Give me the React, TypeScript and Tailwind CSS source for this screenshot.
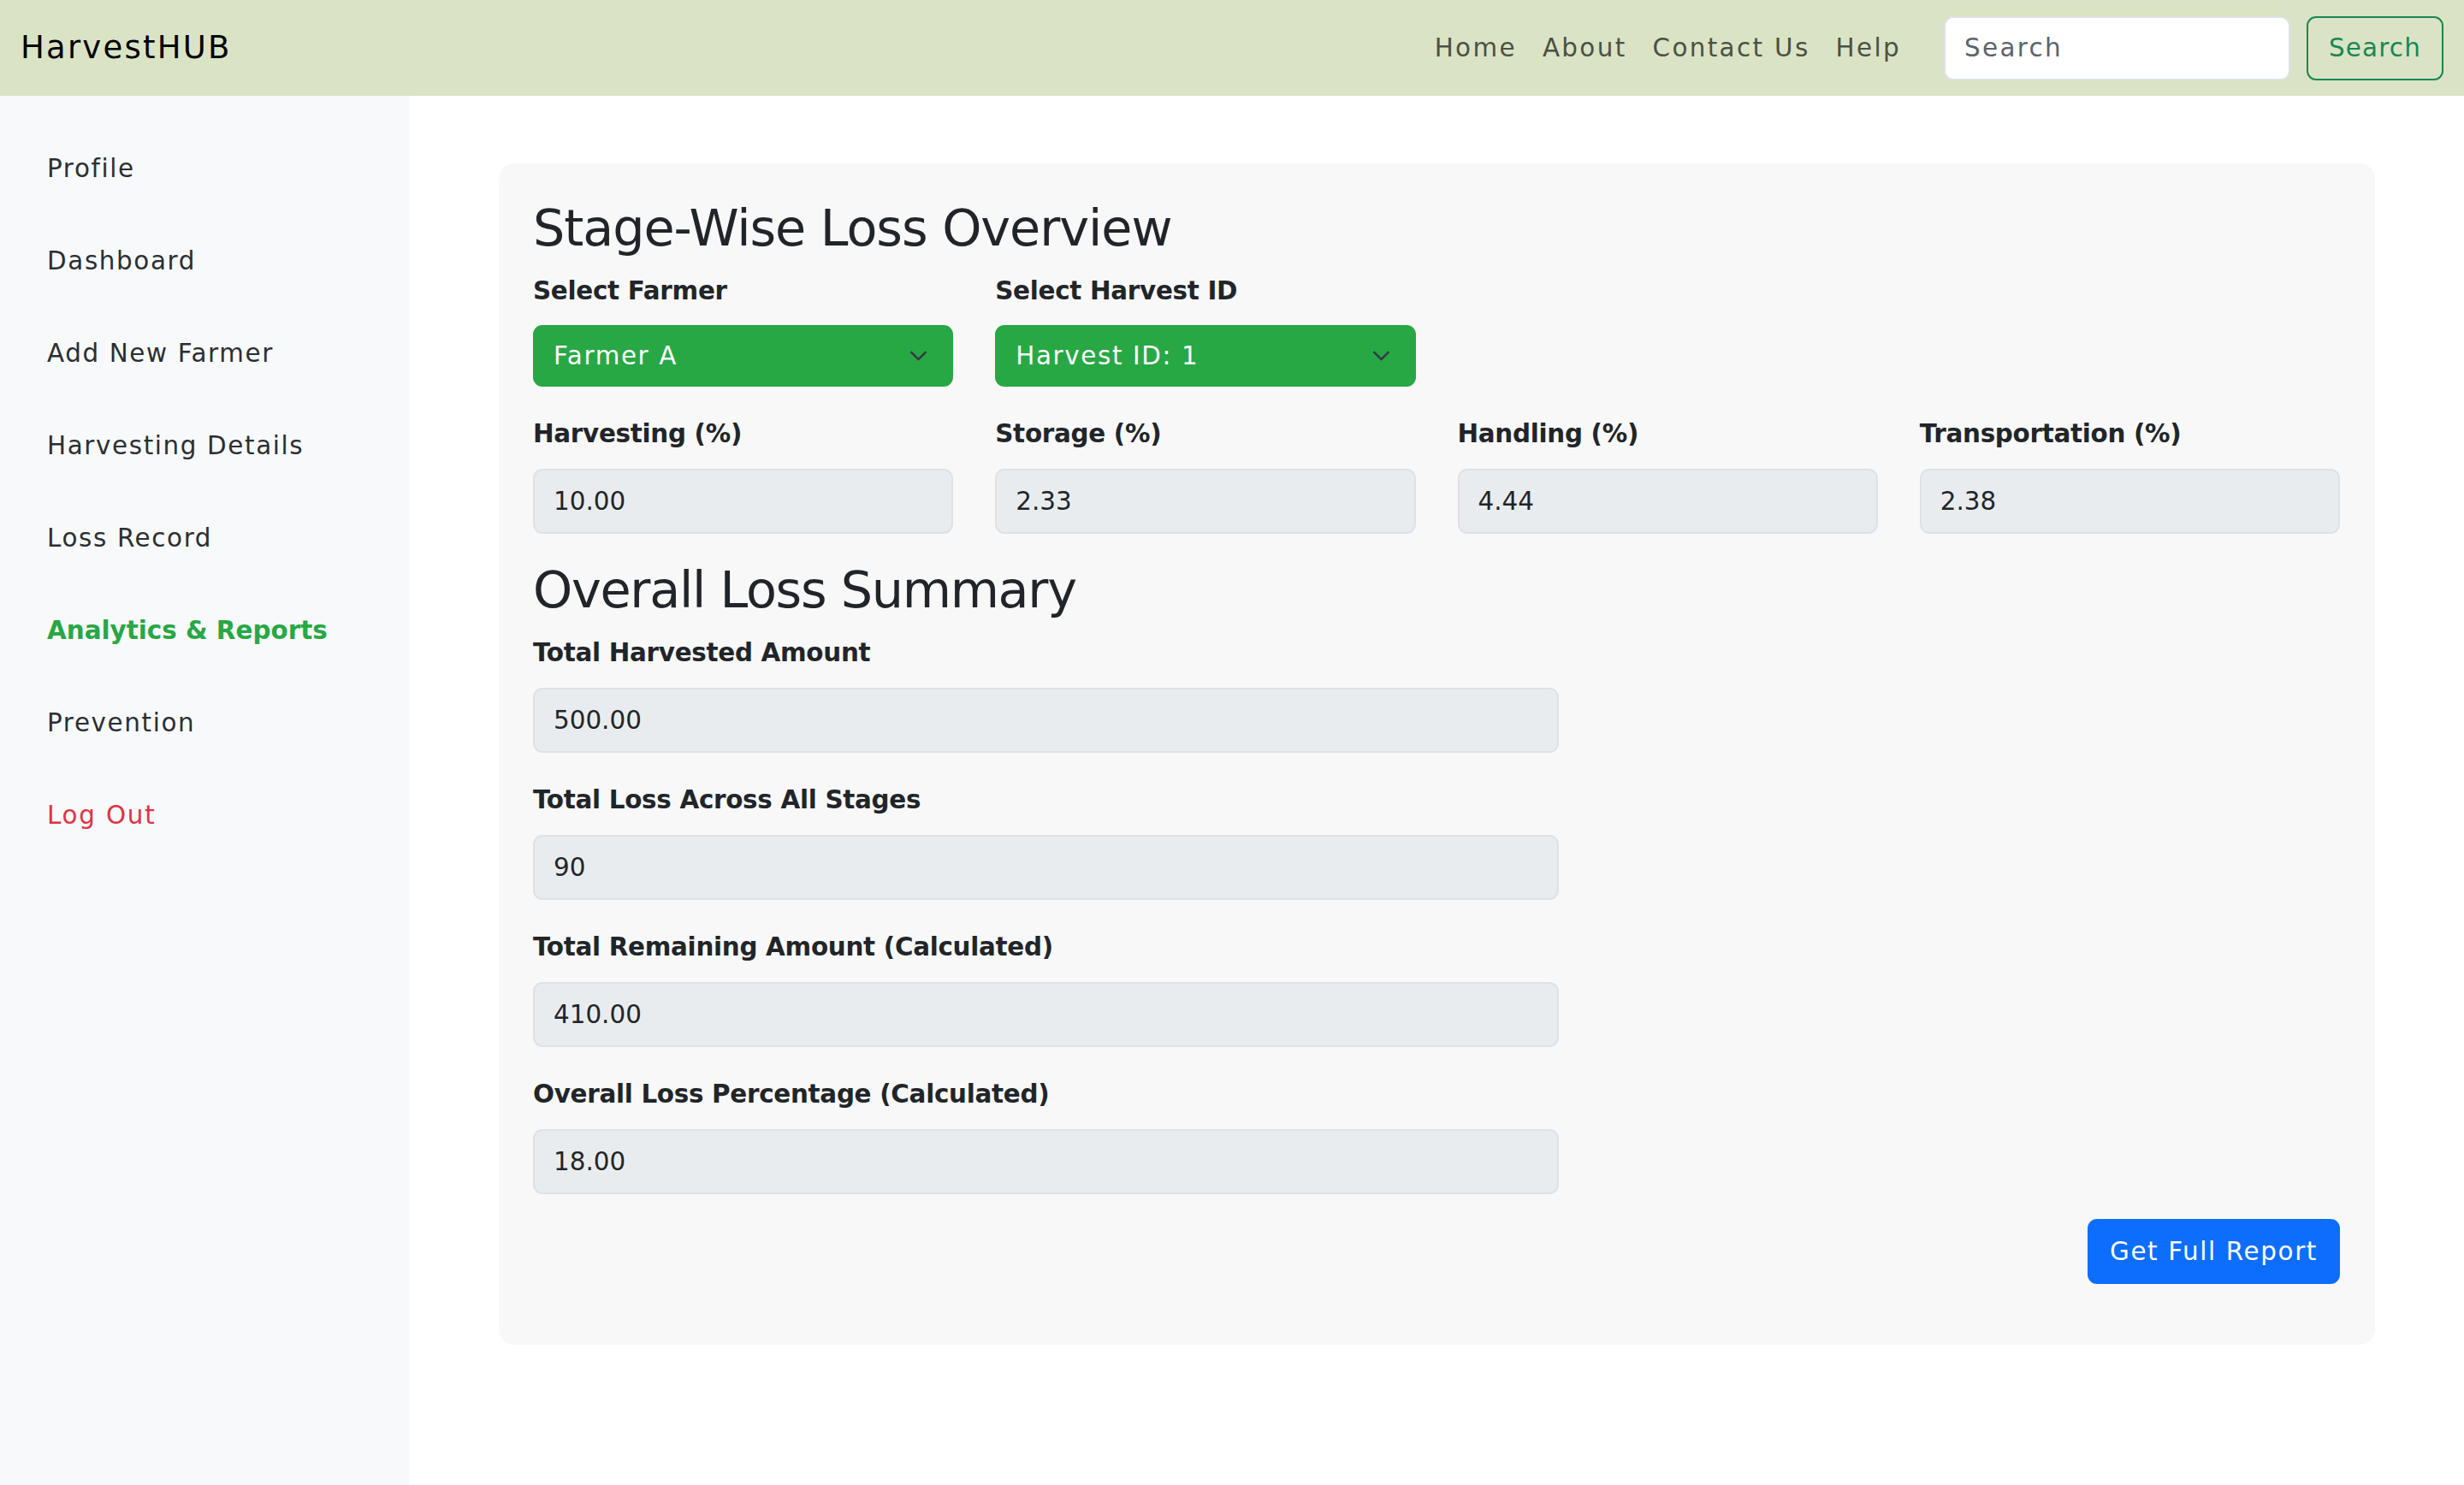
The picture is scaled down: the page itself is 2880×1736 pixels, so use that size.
const SIDEBAR_LINKS = [
  { label: "Profile", tone: "normal" },
  { label: "Dashboard", tone: "normal" },
  { label: "Add New Farmer", tone: "normal" },
  { label: "Harvesting Details", tone: "normal" },
  { label: "Loss Record", tone: "normal" },
  { label: "Analytics & Reports", tone: "active" },
  { label: "Prevention", tone: "normal" },
  { label: "Log Out", tone: "danger" },
];

const STAGES = [
  { label: "Harvesting (%)", value: "10.00" },
  { label: "Storage (%)", value: "2.33" },
  { label: "Handling (%)", value: "4.44" },
  { label: "Transportation (%)", value: "2.38" },
];

const SUMMARY = [
  { label: "Total Harvested Amount", value: "500.00" },
  { label: "Total Loss Across All Stages", value: "90" },
  { label: "Total Remaining Amount (Calculated)", value: "410.00" },
  { label: "Overall Loss Percentage (Calculated)", value: "18.00" },
];

function Chevron() {
  return (
    <svg className="h-[22px] w-[29px] shrink-0" viewBox="0 0 16 16" fill="none">
      <path d="m2 5 6 6 6-6" stroke="#343a40" strokeWidth="1.8" strokeLinecap="round" strokeLinejoin="round" />
    </svg>
  );
}

function GreenSelect({ label, value }: { label: string; value: string }) {
  return (
    <div className="flex flex-col">
      <span className="mb-[18px] text-[29.4px] font-bold leading-[44px] tracking-[-0.01em] text-[#212529]">{label}</span>
      <div className="flex h-[72px] items-center justify-between rounded-[11px] bg-[#28a745] pl-[24px] pr-[26px] text-[29.4px] tracking-[0.055em] text-white">
        <span>{value}</span>
        <Chevron />
      </div>
    </div>
  );
}

function ReadField({ label, value, wide }: { label: string; value: string; wide?: boolean }) {
  return (
    <div className={wide ? "flex w-[1199px] flex-col" : "flex flex-col"}>
      <span className="mb-[19px] text-[29.4px] font-bold leading-[44px] tracking-[-0.01em] text-[#212529]">{label}</span>
      <div className="flex h-[76px] items-center rounded-[11px] border-2 border-[#dee2e6] bg-[#e9ecef] px-[22px] text-[29.4px] text-[#212529]">
        {value}
      </div>
    </div>
  );
}

export default function App() {
  return (
    <div className="flex min-h-[1736px] flex-col bg-white font-['DejaVu_Sans',sans-serif] text-[#212529]">
      <nav className="flex h-[112px] shrink-0 items-center bg-[#dae4c5] pl-[24px] pr-[24px]">
        <span className="text-[37px] tracking-[0.06em] text-black">HarvestHUB</span>
        <div className="ml-auto flex items-center">
          {["Home", "About", "Contact Us", "Help"].map((l) => (
            <a key={l} className="px-[15px] text-[29.4px] tracking-[0.08em] text-[#4c5045]">
              {l}
            </a>
          ))}
        </div>
        <div className="ml-[35px] flex h-[75px] w-[405px] items-center rounded-[11px] border-2 border-[#dee2e6] bg-white px-[22px] text-[29.4px] tracking-[0.08em] text-[#5c636a]">
          Search
        </div>
        <button className="ml-[19px] h-[75px] w-[160px] rounded-[11px] border-2 border-[#198754] text-[29.4px] tracking-[0.04em] text-[#198754]">
          Search
        </button>
      </nav>

      <div className="flex flex-1">
        <aside className="flex w-[479px] shrink-0 flex-col bg-[#f8f9fa] pt-[31px]">
          {SIDEBAR_LINKS.map((s) => (
            <a
              key={s.label}
              className={
                s.tone === "active"
                  ? "flex h-[108px] items-center pl-[55px] text-[29.4px] font-bold text-[#28a745]"
                  : s.tone === "danger"
                    ? "flex h-[108px] items-center pl-[55px] text-[29.4px] tracking-[0.06em] text-[#dc3545]"
                    : "flex h-[108px] items-center pl-[55px] text-[29.4px] tracking-[0.055em] text-[#2b2f32]"
              }
            >
              {s.label}
            </a>
          ))}
        </aside>

        <main className="flex-1 px-[104px] pt-[79px]">
          <section className="rounded-[18px] bg-[#f8f8f8] pb-[71px] pl-[40px] pr-[41px] pt-[41px]">
            <h2 className="mb-[16px] text-[58.8px] leading-[70px] tracking-[-0.018em]">Stage-Wise Loss Overview</h2>

            <div className="grid grid-cols-4 gap-x-[49px]">
              <GreenSelect label="Select Farmer" value="Farmer A" />
              <GreenSelect label="Select Harvest ID" value="Harvest ID: 1" />
            </div>

            <div className="mt-[33px] grid grid-cols-4 gap-x-[49px]">
              {STAGES.map((s) => (
                <ReadField key={s.label} label={s.label} value={s.value} />
              ))}
            </div>

            <h2 className="mb-[16px] mt-[31px] text-[58.8px] leading-[70px] tracking-[-0.022em]">Overall Loss Summary</h2>

            <div className="flex flex-col gap-[33px]">
              {SUMMARY.map((s) => (
                <ReadField key={s.label} label={s.label} value={s.value} wide />
              ))}
            </div>

            <div className="mt-[29px] flex justify-end">
              <button className="h-[76px] rounded-[11px] bg-[#0d6efd] px-[26px] text-[29.4px] tracking-[0.055em] text-white">
                Get Full Report
              </button>
            </div>
          </section>
        </main>
      </div>
    </div>
  );
}
